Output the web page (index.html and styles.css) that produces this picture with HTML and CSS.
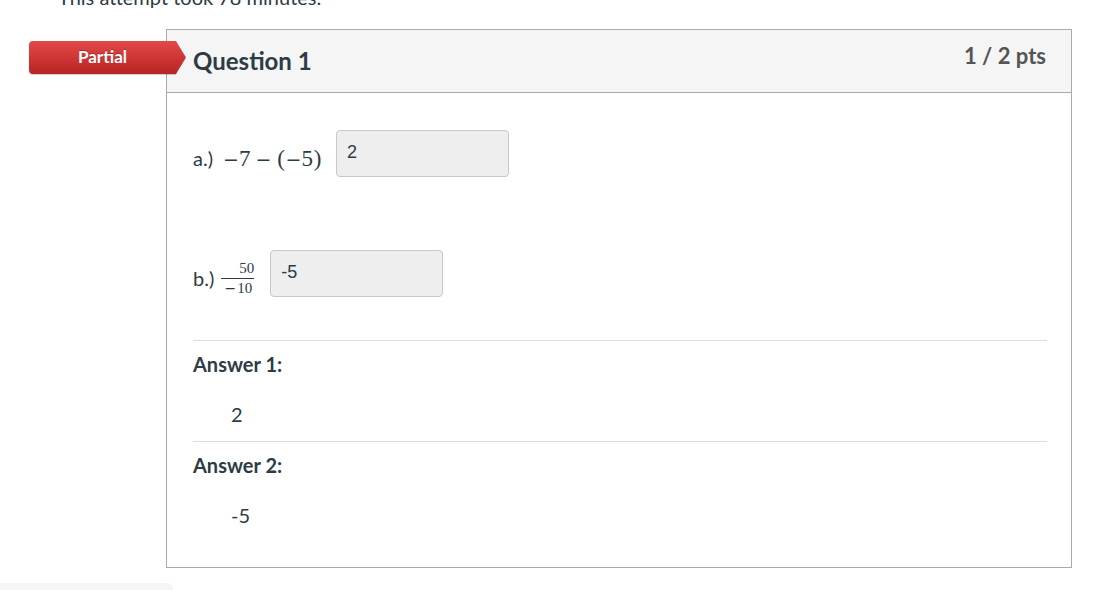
FILE: index.html
```html
<!DOCTYPE html>
<html lang="en">
<head>
<meta charset="utf-8">
<title>Quiz results</title>
<link rel="stylesheet" href="styles.css">
</head>
<body>
<div class="attempt-note">This attempt took 78 minutes.</div>

<div class="question-wrap">
  <div class="badge">Partial</div>
  <div class="question">
    <div class="q-header">
      <span class="q-name">Question 1</span>
      <span class="q-points">1 / 2 pts</span>
    </div>
    <div class="q-body">
      <div class="q-row row-a">
        <span class="label">a.)</span>
        <span class="math"><span class="op un">−</span>7<span class="op bin">−</span><span class="par">(</span><span class="op un">−</span>5<span class="par">)</span></span>
        <div class="answer-box">2</div>
      </div>
      <div class="q-row row-b">
        <span class="label">b.)</span>
        <span class="frac"><span class="num">50</span><span class="den"><span class="fop">−</span>10</span></span>
        <div class="answer-box">-5</div>
      </div>
      <div class="answers">
        <div class="answer-group">
          <div class="answer-title">Answer 1:</div>
          <div class="answer-value">2</div>
        </div>
        <div class="answer-group">
          <div class="answer-title">Answer 2:</div>
          <div class="answer-value">-5</div>
        </div>
      </div>
    </div>
  </div>
</div>

<div class="next-panel"></div>
</body>
</html>
```

FILE: styles.css
```css
html, body {
  margin: 0;
  padding: 0;
  background: #fff;
}
body {
  font-family: Lato, "Noto Sans", sans-serif;
  color: #2d3b45;
  height: 590px;
  overflow: hidden;
}
.attempt-note {
  font-size: 20px;
  line-height: 24px;
  margin-top: -15px;
  padding-left: 58px;
  height: 24px;
}
.question-wrap {
  position: relative;
  margin-top: 20px;
  margin-left: 166px;
  width: 906px;
}
.question {
  border: 1px solid #aaaaaa;
  height: 537px;
  box-sizing: content-box;
}
.badge {
  position: absolute;
  left: -137px;
  top: 12px;
  width: 147px;
  height: 33px;
  background: linear-gradient(#e44848, #b82424);
  border-radius: 4px 0 0 4px;
  color: #fff;
  font-weight: bold;
  font-size: 17px;
  line-height: 31px;
  text-align: center;
  text-shadow: 0 -1px 0 rgba(0,0,0,0.25);
  box-shadow: 0 1px 1px rgba(0,0,0,0.2);
}
.badge::after {
  content: "";
  position: absolute;
  right: -10px;
  top: 0;
  width: 10px;
  height: 33px;
  background: linear-gradient(#e44848, #b82424);
  clip-path: polygon(0 0, 100% 50%, 0 100%);
}
.q-header {
  background: #f5f5f5;
  height: 62px;
  border-bottom: 1px solid #aaaaaa;
  display: flex;
  justify-content: space-between;
  align-items: flex-start;
  padding: 0 25px 0 26px;
}
.q-name {
  font-size: 24px;
  font-weight: bold;
  line-height: 1.2;
  margin-top: 17px;
}
.q-points {
  font-size: 22px;
  font-weight: bold;
  line-height: 1.2;
  margin-top: 13px;
  color: #555;
}
.q-body {
  padding: 37px 24px 0 26px;
}
.q-row {
  display: flex;
  align-items: flex-start;
  height: 47px;
}
.row-b {
  margin-top: 73px;
}
.label {
  font-size: 20px;
  line-height: 24px;
  margin-top: 16px;
}
.math {
  font-family: "Liberation Serif", "DejaVu Serif", serif;
  font-size: 23px;
  line-height: 26px;
  margin-top: 16px;
  margin-left: 10px;
  margin-right: 14px;
  white-space: nowrap;
}
.math .op {
  display: inline-block;
  width: 16px;
  text-align: center;
  font-family: "DejaVu Serif", serif;
  font-size: 19px;
}
.math .un {
  text-align: left;
}
.math .bin {
  margin: 0 5px;
}
.math .par {
  display: inline-block;
  width: 9px;
  text-align: center;
}
.frac {
  font-family: "Liberation Serif", "DejaVu Serif", serif;
  font-size: 15px;
  display: inline-flex;
  flex-direction: column;
  align-items: center;
  margin-left: 6px;
  margin-right: 15px;
  margin-top: 10px;
  padding: 0 1px;
}
.frac .num {
  line-height: 16px;
  padding-left: 14px;
  border-bottom: 1px solid #2d3b45;
  padding-bottom: 2px;
  width: 100%;
  text-align: right;
  box-sizing: border-box;
}
.frac .den {
  line-height: 16px;
  padding: 1px 2px 0;
}
.frac .fop {
  display: inline-block;
  width: 14px;
  text-align: center;
  font-family: "DejaVu Serif", serif;
  font-size: 14px;
}
.answer-box {
  height: 45px;
  background: #eeeeee;
  border: 1px solid #c8c8c8;
  border-radius: 4px;
  font-family: "Liberation Sans", Arial, sans-serif;
  font-size: 18px;
  line-height: 42px;
  padding-left: 10px;
  box-sizing: content-box;
  width: 161px;
}
.answers {
  margin-top: 43px;
}
.answer-group {
  border-top: 1px solid #dddddd;
  padding-top: 11px;
  height: 89px;
}
.answer-title {
  font-size: 20px;
  font-weight: bold;
  line-height: 24px;
}
.answer-value {
  font-size: 20px;
  line-height: 24px;
  margin-top: 26px;
  padding-left: 38px;
}
.next-panel {
  position: absolute;
  left: 0;
  top: 583px;
  width: 173px;
  height: 20px;
  background: #f5f5f5;
  border-radius: 0 6px 0 0;
}
```
